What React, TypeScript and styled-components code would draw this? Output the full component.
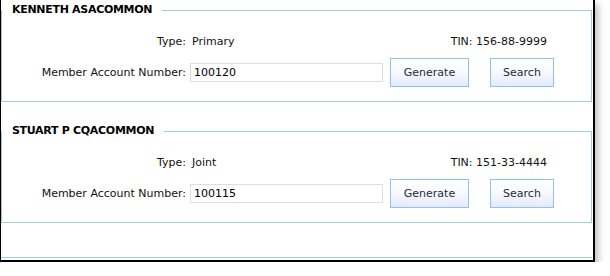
import styled, { createGlobalStyle } from "styled-components";

const GlobalStyle = createGlobalStyle`
  body {
    margin: 0;
    background: #ffffff;
    font-family: "DejaVu Sans", Verdana, sans-serif;
    font-size: 11px;
    color: #111111;
  }
`;

const Frame = styled.div`
  width: 592px;
  height: 260px;
  overflow: hidden;
  background: #ffffff;
  border-left: 1px solid #000000;
  border-right: 2px solid #000000;
  border-bottom: 2px solid #000000;
  box-shadow: 4px 4px 6px rgba(0, 0, 0, 0.22);
`;

const Section = styled.fieldset<{ $gap?: number }>`
  margin: ${(p) => p.$gap ?? 0}px 1px 0 0;
  padding: 0 0 14px 0;
  border: 1px solid #a6cbe9;
  border-left-color: #b3bccb;
  min-width: 0;
`;

const Legend = styled.legend`
  padding: 0 10px;
  height: 20px;
  line-height: 20px;
  font-weight: bold;
  font-size: 11px;
  letter-spacing: -0.3px;
  color: #000000;
`;

const Divider = styled.div`
  margin: 34px 1px 0 0;
  border-top: 1px solid #a6cbe9;
  height: 4px;
`;

const Grid = styled.div`
  display: grid;
  grid-template-columns: 188px 200px 100px 64px;
  grid-template-rows: 20px 29px;
  row-gap: 7px;
  margin-top: 11px;
  align-items: center;
`;

const Label = styled.div`
  text-align: right;
  padding-right: 4px;
  white-space: nowrap;
`;

const Value = styled.div`
  padding-left: 2px;
  white-space: nowrap;
`;

const Tin = styled.div`
  grid-column: 3 / 5;
  text-align: right;
  padding-right: 7px;
  white-space: nowrap;
`;

const Input = styled.input`
  box-sizing: border-box;
  width: 193px;
  height: 19px;
  margin: 0;
  padding: 0 3px;
  border: 1px solid #dedede;
  font-family: "DejaVu Sans", Verdana, sans-serif;
  font-size: 11px;
  color: #000000;
  outline: none;
`;

const Button = styled.button<{ $w: number }>`
  box-sizing: border-box;
  width: ${(p) => p.$w}px;
  height: 29px;
  margin: 0;
  padding: 0;
  border: 1px solid #8fc1ec;
  border-radius: 0;
  background: linear-gradient(#ffffff 0%, #f8faff 45%, #e4eafb 100%);
  font-family: "DejaVu Sans", Verdana, sans-serif;
  font-size: 11px;
  color: #2a2a3a;
  cursor: pointer;
`;

interface Member {
  name: string;
  type: string;
  tin: string;
  account: string;
}

const members: Member[] = [
  { name: "KENNETH ASACOMMON", type: "Primary", tin: "156-88-9999", account: "100120" },
  { name: "STUART P CQACOMMON", type: "Joint", tin: "151-33-4444", account: "100115" },
];

function MemberBlock({ member, gap }: { member: Member; gap?: number }) {
  return (
    <Section $gap={gap}>
      <Legend>{member.name}</Legend>
      <Grid>
        <Label>Type:</Label>
        <Value>{member.type}</Value>
        <Tin>TIN: {member.tin}</Tin>
        <Label>Member Account Number:</Label>
        <div>
          <Input defaultValue={member.account} />
        </div>
        <div>
          <Button $w={79}>Generate</Button>
        </div>
        <div>
          <Button $w={64}>Search</Button>
        </div>
      </Grid>
    </Section>
  );
}

export default function App() {
  return (
    <>
      <GlobalStyle />
      <Frame>
        {members.map((m, i) => (
          <MemberBlock key={m.account} member={m} gap={i === 0 ? 0 : 19} />
        ))}
        <Divider />
      </Frame>
    </>
  );
}
